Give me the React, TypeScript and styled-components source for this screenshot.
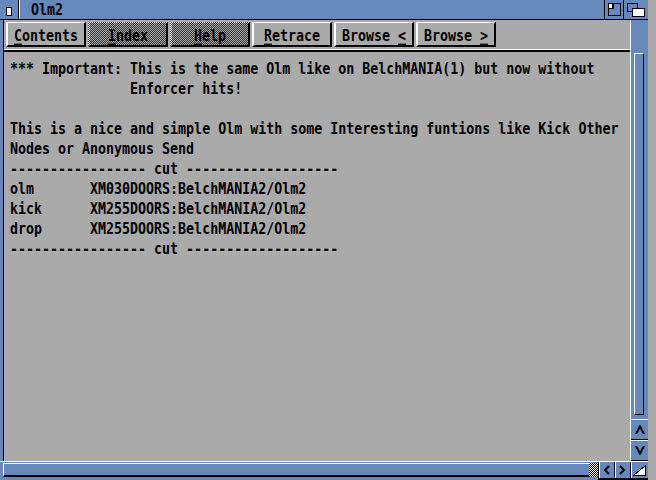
import styled, { createGlobalStyle, css } from 'styled-components';

const BLUE = '#6688bb';
const GRAY = '#aaaaaa';

const GlobalStyle = createGlobalStyle`
  html, body {
    margin: 0;
    padding: 0;
    background: ${GRAY};
    overflow: hidden;
  }
  #root {
    width: 656px;
    height: 480px;
  }
`;

const topaz = css`
  font-family: "DejaVu Sans Mono", "Liberation Mono", monospace;
  font-size: 13.3px;
  font-weight: bold;
  color: #000;
`;

const dither = css`
  background-image: repeating-conic-gradient(#000 0 25%, transparent 0 50%);
  background-size: 2px 2px;
`;

const Glyphs = styled.span`
  display: inline-block;
  white-space: pre;
  transform: scaleY(1.25);
`;

const Window = styled.div`
  ${topaz}
  width: 648px;
  height: 480px;
  display: flex;
  flex-direction: column;
  background: ${GRAY};
`;

const TitleBar = styled.div`
  height: 19px;
  display: flex;
  background: ${BLUE};
  border-bottom: 1px solid #000;
`;

const CloseGadget = styled.div`
  width: 18px;
  border-right: 1px solid #000;
  display: flex;
  align-items: center;
  justify-content: center;

  &::before {
    content: '';
    width: 4px;
    height: 7px;
    margin-top: 3px;
    background: #fff;
    border: 1px solid #000;
  }
`;

const DragBar = styled.div`
  flex: 1;
  display: flex;
  align-items: center;
  padding-left: 11px;
  border-left: 1px solid #fff;
`;

const TitleGadget = styled.div<{ $w: number }>`
  width: ${(p) => p.$w}px;
  border-left: 1px solid #000;
  display: flex;
  align-items: center;
  justify-content: center;
`;

const Middle = styled.div`
  flex: 1;
  display: flex;
  min-height: 0;
`;

const LeftBorder = styled.div`
  width: 3px;
  background: ${BLUE};
  border-right: 1px solid #000;
`;

const Main = styled.div`
  flex: 1;
  display: flex;
  flex-direction: column;
`;

const ButtonBar = styled.div`
  display: flex;
  gap: 2px;
  padding: 2px 0 0 2px;
`;

const Button = styled.div<{ $ghost?: boolean }>`
  position: relative;
  box-sizing: border-box;
  width: 80px;
  height: 25px;
  padding-top: 2px;
  display: flex;
  align-items: center;
  justify-content: center;
  border-top: 1px solid #fff;
  border-left: 2px solid #fff;
  border-right: 2px solid #000;
  border-bottom: 2px solid #000;

  ${(p) =>
    p.$ghost &&
    css`
      &::after {
        content: '';
        position: absolute;
        inset: -1px -2px -2px -2px;
        opacity: 0.7;
        ${dither}
      }
    `}
`;

const Key = styled.span`
  text-decoration: underline;
  text-decoration-thickness: 1px;
  text-underline-offset: 2px;
`;

const Rule = styled.div`
  margin-top: 2px;
  border-top: 1px solid #fff;
  border-bottom: 2px solid #000;
`;

const Content = styled.div`
  flex: 1;
  padding: 7px 6px 0 6px;
`;

const Line = styled.div`
  height: 20px;
  line-height: 20px;
  white-space: pre;
  transform: scaleY(1.25);
`;

const RightBorder = styled.div`
  width: 17px;
  display: flex;
  flex-direction: column;
  background: ${BLUE};
  border-left: 1px solid #fff;
`;

const VProp = styled.div`
  flex: 1;
  margin: 33px 4px 4px 3px;
  border-top: 1px solid #fff;
  border-left: 1px solid #fff;
  border-right: 1px solid #000;
  border-bottom: 1px solid #000;
`;

const VArrow = styled.div`
  height: 19px;
  display: flex;
  align-items: center;
  justify-content: center;
  border-top: 1px solid #fff;
  border-bottom: 1px solid #000;
`;

const BottomRow = styled.div`
  height: 18px;
  display: flex;
  background: ${BLUE};
  border-top: 1px solid #fff;
`;

const BottomLeft = styled.div`
  width: 3px;
`;

const HProp = styled.div`
  flex: 1;
  display: flex;
  margin: 1px 0 3px 0;
  background-color: #fff;
  ${dither}
`;

const HKnob = styled.div`
  width: calc(100% - 10px);
  background: ${BLUE};
  border-top: 1px solid #fff;
  border-left: 1px solid #fff;
  border-bottom: 2px solid #000;
`;

const BottomGadget = styled.div<{ $w: number }>`
  width: ${(p) => p.$w}px;
  display: flex;
  align-items: center;
  justify-content: center;
  border-left: 1px solid #000;
  box-shadow: inset 1px 0 #fff;
  border-bottom: 2px solid #000;
`;

const ZoomIcon = () => (
  <svg width="13" height="13" viewBox="0 0 13 13" shapeRendering="crispEdges">
    <rect x="0.5" y="0.5" width="12" height="12" fill="none" stroke="#000" />
    <rect x="1" y="1" width="5" height="5" fill="#000" />
    <rect x="1" y="1" width="3" height="4" fill="#fff" />
  </svg>
);

const DepthIcon = () => (
  <svg width="18" height="14" viewBox="0 0 18 14" shapeRendering="crispEdges">
    <rect x="0.5" y="0.5" width="10" height="8" fill={BLUE} stroke="#000" />
    <rect x="5.5" y="5.5" width="12" height="8" fill="#fff" stroke="#000" />
  </svg>
);

const Chevron = ({ d, w, h }: { d: string; w: number; h: number }) => (
  <svg width={w} height={h} viewBox={`0 0 ${w} ${h}`}>
    <path d={d} fill="none" stroke="#000" strokeWidth="2" strokeLinejoin="miter" />
  </svg>
);

const SizeIcon = () => (
  <svg width="13" height="11" viewBox="0 0 13 11" shapeRendering="crispEdges">
    <polygon points="1,10 12,1 12,10" fill="#fff" stroke="#000" />
  </svg>
);

const cut = '----------------- cut -------------------';

const lines = [
  '*** Important: This is the same Olm like on BelchMANIA(1) but now without',
  '               Enforcer hits!',
  '',
  'This is a nice and simple Olm with some Interesting funtions like Kick Other',
  'Nodes or Anonymous Send',
  cut,
  'olm       XM030DOORS:BelchMANIA2/Olm2',
  'kick      XM255DOORS:BelchMANIA2/Olm2',
  'drop      XM255DOORS:BelchMANIA2/Olm2',
  cut,
];

const buttons: { key: string; rest: string; ghost?: boolean; after?: boolean }[] = [
  { key: 'C', rest: 'ontents' },
  { key: 'I', rest: 'ndex', ghost: true },
  { key: 'H', rest: 'elp', ghost: true },
  { key: 'R', rest: 'etrace' },
  { key: '<', rest: 'Browse ', after: true },
  { key: '>', rest: 'Browse ', after: true },
];

export default function App() {
  return (
    <>
      <GlobalStyle />
      <Window>
        <TitleBar>
          <CloseGadget />
          <DragBar>
            <Glyphs>Olm2</Glyphs>
          </DragBar>
          <TitleGadget $w={18}>
            <ZoomIcon />
          </TitleGadget>
          <TitleGadget $w={24}>
            <DepthIcon />
          </TitleGadget>
        </TitleBar>
        <Middle>
          <LeftBorder />
          <Main>
            <ButtonBar>
              {buttons.map((b) => (
                <Button key={b.rest + b.key} $ghost={b.ghost}>
                  <Glyphs>
                    {b.after ? (
                      <>
                        {b.rest}
                        <Key>{b.key}</Key>
                      </>
                    ) : (
                      <>
                        <Key>{b.key}</Key>
                        {b.rest}
                      </>
                    )}
                  </Glyphs>
                </Button>
              ))}
            </ButtonBar>
            <Rule />
            <Content>
              {lines.map((l, i) => (
                <Line key={i}>{l}</Line>
              ))}
            </Content>
          </Main>
          <RightBorder>
            <VProp />
            <VArrow>
              <Chevron w={10} h={9} d="M1 9 L5 1.5 L9 9" />
            </VArrow>
            <VArrow>
              <Chevron w={10} h={9} d="M1 0 L5 7.5 L9 0" />
            </VArrow>
          </RightBorder>
        </Middle>
        <BottomRow>
          <BottomLeft />
          <HProp>
            <HKnob />
          </HProp>
          <BottomGadget $w={15}>
            <Chevron w={7} h={10} d="M6 1 L2 5 L6 9" />
          </BottomGadget>
          <BottomGadget $w={15}>
            <Chevron w={7} h={10} d="M1 1 L5 5 L1 9" />
          </BottomGadget>
          <BottomGadget $w={17}>
            <SizeIcon />
          </BottomGadget>
        </BottomRow>
      </Window>
    </>
  );
}
